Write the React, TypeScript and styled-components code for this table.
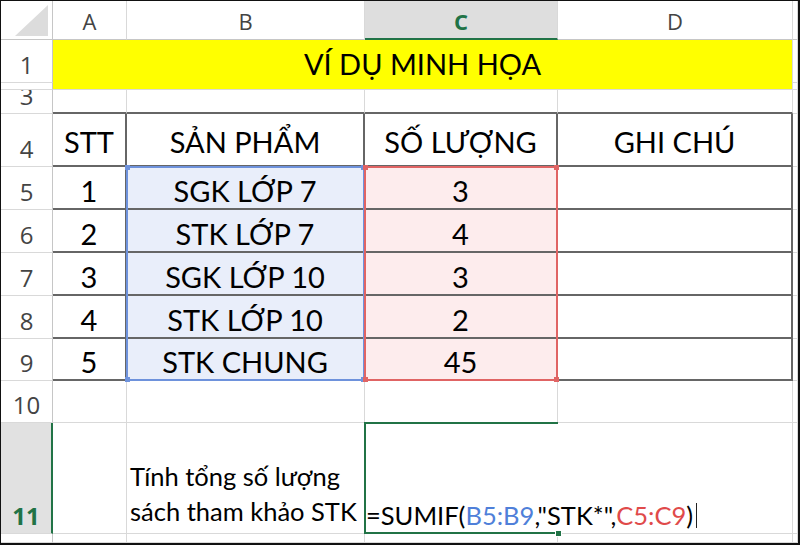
import styled, { createGlobalStyle, css } from 'styled-components';

const GRID = '#d9d9d9';
const HEAD_LINE = '#c6c6c6';
const TABLE = '2px solid #666';
const GREEN = '#217346';
const BLUE = '#6e92dc';
const RED = '#e06464';

const GlobalStyle = createGlobalStyle`
  html, body {
    margin: 0;
    padding: 0;
    background: #fff;
  }
`;

const Sheet = styled.div`
  width: 800px;
  height: 545px;
  box-sizing: border-box;
  border-style: solid;
  border-color: #111;
  border-width: 1px 2px 2px 1px;
  background: #fff;
  overflow: hidden;
  display: grid;
  grid-template-columns: 52px 74px 238px 193px 235px 1fr;
  grid-template-rows: 39px 43px 7px 24px 53px 43px 43px 43px 43px 42px 42px 111px 1fr;
`;

type Place = { $c: number; $r: number; $cs?: number; $rs?: number };

const placed = css<Place>`
  grid-column: ${p => p.$c} / span ${p => p.$cs ?? 1};
  grid-row: ${p => p.$r} / span ${p => p.$rs ?? 1};
  box-sizing: border-box;
  min-width: 0;
  min-height: 0;
`;

const Corner = styled.div<Place>`
  ${placed};
  display: flex;
  align-items: flex-end;
  justify-content: flex-end;
  padding: 0 4px 3px 0;
  border-right: 1px solid ${HEAD_LINE};
  border-bottom: 1px solid ${HEAD_LINE};
`;

const CornerMark = styled.div`
  width: 33px;
  height: 31px;
  background: #dcdcdc;
  clip-path: polygon(100% 0, 100% 100%, 0 100%);
`;

const ColHead = styled.div<Place & { $active?: boolean }>`
  ${placed};
  display: flex;
  align-items: center;
  justify-content: center;
  padding-top: 2px;
  font-family: 'Open Sans', 'Noto Sans', sans-serif;
  font-size: 22px;
  line-height: 1;
  color: #444;
  background: #fff;
  border-right: 1px solid ${GRID};
  border-bottom: 1px solid ${HEAD_LINE};

  ${p =>
    p.$active &&
    css`
      background: #dedede;
      color: ${GREEN};
      font-weight: 700;
      border-bottom: 2px solid ${GREEN};
    `}
`;

const RowHead = styled.div<Place & { $active?: boolean }>`
  ${placed};
  display: flex;
  align-items: flex-end;
  justify-content: center;
  overflow: hidden;
  padding-bottom: 5px;
  font-family: 'Open Sans', 'Noto Sans', sans-serif;
  font-size: 24px;
  line-height: 1;
  color: #444;
  background: #fff;
  border-right: 1px solid ${HEAD_LINE};
  border-bottom: 1px solid ${GRID};

  ${p =>
    p.$active &&
    css`
      background: #e1e1e1;
      color: ${GREEN};
      font-weight: 700;
      border-right: 2px solid ${GREEN};
    `}
`;

type CellProps = Place & {
  $bg?: string;
  $br?: string;
  $bb?: string;
  $pb?: number;
  $size?: number;
};

const Cell = styled.div<CellProps>`
  ${placed};
  display: flex;
  align-items: flex-end;
  justify-content: center;
  overflow: hidden;
  padding-bottom: ${p => p.$pb ?? 3}px;
  font-family: Lato, 'Noto Sans', sans-serif;
  font-size: ${p => p.$size ?? 29}px;
  line-height: 1;
  color: #000;
  white-space: nowrap;
  background: ${p => p.$bg ?? '#fff'};
  border-right: ${p => p.$br ?? `1px solid ${GRID}`};
  border-bottom: ${p => p.$bb ?? `1px solid ${GRID}`};
`;

const NoteCell = styled(Cell)`
  flex-direction: column;
  align-items: flex-start;
  justify-content: flex-end;
  padding-left: 3px;
  line-height: 35px;
`;

const FormulaCell = styled(Cell)`
  position: relative;
  z-index: 1;
  overflow: visible;
  justify-content: flex-start;
  background: transparent;
  border-right: none;
  border-bottom: none;
  padding-left: 1px;
`;

const Ref = styled.span<{ $color: string }>`
  color: ${p => p.$color};
`;

const Caret = styled.span`
  display: inline-block;
  width: 0;
  height: 25px;
  margin-left: 3px;
  border-left: 1px solid #222;
  vertical-align: -5px;
`;

const RangeBox = styled.div<Place & { $color: string }>`
  ${placed};
  position: relative;
  z-index: 2;
  pointer-events: none;
  margin: -1px 0 0 -1px;
  border: 2px solid ${p => p.$color};
`;

const Dot = styled.span<{ $color: string; $x: 'left' | 'right'; $y: 'top' | 'bottom' }>`
  position: absolute;
  width: 5px;
  height: 5px;
  background: ${p => p.$color};
  ${p => p.$x}: -3px;
  ${p => p.$y}: -3px;
`;

const Selection = styled.div<Place>`
  ${placed};
  position: relative;
  z-index: 3;
  pointer-events: none;
  margin: -1px 0 0 -1px;
  border: 2px solid ${GREEN};
  border-right: none;
`;

const FillHandle = styled.span`
  position: absolute;
  right: -3px;
  bottom: -4px;
  width: 5px;
  height: 5px;
  background: ${GREEN};
  outline: 1px solid #fff;
`;

const products = [
  { stt: '1', name: 'SGK LỚP 7', qty: '3' },
  { stt: '2', name: 'STK LỚP 7', qty: '4' },
  { stt: '3', name: 'SGK LỚP 10', qty: '3' },
  { stt: '4', name: 'STK LỚP 10', qty: '2' },
  { stt: '5', name: 'STK CHUNG', qty: '45' },
];

const rowHeads = [
  { label: '1', r: 2 },
  { label: '', r: 3 },
  { label: '3', r: 4 },
  { label: '4', r: 5 },
  { label: '5', r: 6 },
  { label: '6', r: 7 },
  { label: '7', r: 8 },
  { label: '8', r: 9 },
  { label: '9', r: 10 },
  { label: '10', r: 11 },
  { label: '11', r: 12, active: true },
  { label: '', r: 13 },
];

const corners = [
  ['left', 'top'],
  ['right', 'top'],
  ['left', 'bottom'],
  ['right', 'bottom'],
] as const;

function Range({ c, color }: { c: number; color: string }) {
  return (
    <RangeBox $c={c} $r={6} $rs={5} $color={color}>
      {corners.map(([x, y]) => (
        <Dot key={x + y} $color={color} $x={x} $y={y} />
      ))}
    </RangeBox>
  );
}

export default function App() {
  return (
    <>
      <GlobalStyle />
      <Sheet>
        <Corner $c={1} $r={1}>
          <CornerMark />
        </Corner>
        {['A', 'B', 'C', 'D', ''].map((l, i) => (
          <ColHead key={i} $c={i + 2} $r={1} $active={l === 'C'}>
            {l}
          </ColHead>
        ))}

        {rowHeads.map(h => (
          <RowHead key={h.r} $c={1} $r={h.r} $active={h.active}>
            {h.label}
          </RowHead>
        ))}

        {/* row 1-2: merged title */}
        <Cell $c={2} $r={2} $cs={4} $rs={2} $bg="#ffff00" $size={29} $pb={11}>
          VÍ DỤ MINH HỌA
        </Cell>
        <Cell $c={6} $r={2} />
        <Cell $c={6} $r={3} />

        {/* row 3: top edge of the table */}
        {[2, 3, 4, 5].map(c => (
          <Cell key={c} $c={c} $r={4} $bb={TABLE} />
        ))}
        <Cell $c={6} $r={4} />

        {/* row 4: headings */}
        {['STT', 'SẢN PHẨM', 'SỐ LƯỢNG', 'GHI CHÚ'].map((t, i) => (
          <Cell key={t} $c={i + 2} $r={5} $br={TABLE} $bb={TABLE} $pb={9}>
            {t}
          </Cell>
        ))}
        <Cell $c={6} $r={5} />

        {products.map((p, i) => {
          const r = i + 6;
          return [
            <Cell key={`a${r}`} $c={2} $r={r} $br={TABLE} $bb={TABLE}>
              {p.stt}
            </Cell>,
            <Cell key={`b${r}`} $c={3} $r={r} $br={TABLE} $bb={TABLE} $bg="#e9eefa">
              {p.name}
            </Cell>,
            <Cell key={`c${r}`} $c={4} $r={r} $br={TABLE} $bb={TABLE} $bg="#fdeced">
              {p.qty}
            </Cell>,
            <Cell key={`d${r}`} $c={5} $r={r} $br={TABLE} $bb={TABLE} />,
            <Cell key={`e${r}`} $c={6} $r={r} />,
          ];
        })}

        {/* row 10 */}
        {[2, 3, 4, 5, 6].map(c => (
          <Cell key={c} $c={c} $r={11} />
        ))}

        {/* row 11 */}
        <Cell $c={2} $r={12} />
        <NoteCell $c={3} $r={12} $pb={4} $size={25.5}>
          <span>Tính tổng số lượng</span>
          <span>sách tham khảo STK</span>
        </NoteCell>
        <FormulaCell $c={4} $r={12} $size={25.5} $pb={6}>
          =SUMIF(<Ref $color="#4f7fd9">B5:B9</Ref>,"STK*",<Ref $color="#e04a4a">C5:C9</Ref>)
          <Caret />
        </FormulaCell>
        <Cell $c={5} $r={12} />
        <Cell $c={6} $r={12} />

        {/* row 12, cut off */}
        {[2, 3, 4, 5, 6].map(c => (
          <Cell key={c} $c={c} $r={13} />
        ))}

        <Range c={3} color={BLUE} />
        <Range c={4} color={RED} />
        <Selection $c={4} $r={12}>
          <FillHandle />
        </Selection>
      </Sheet>
    </>
  );
}
